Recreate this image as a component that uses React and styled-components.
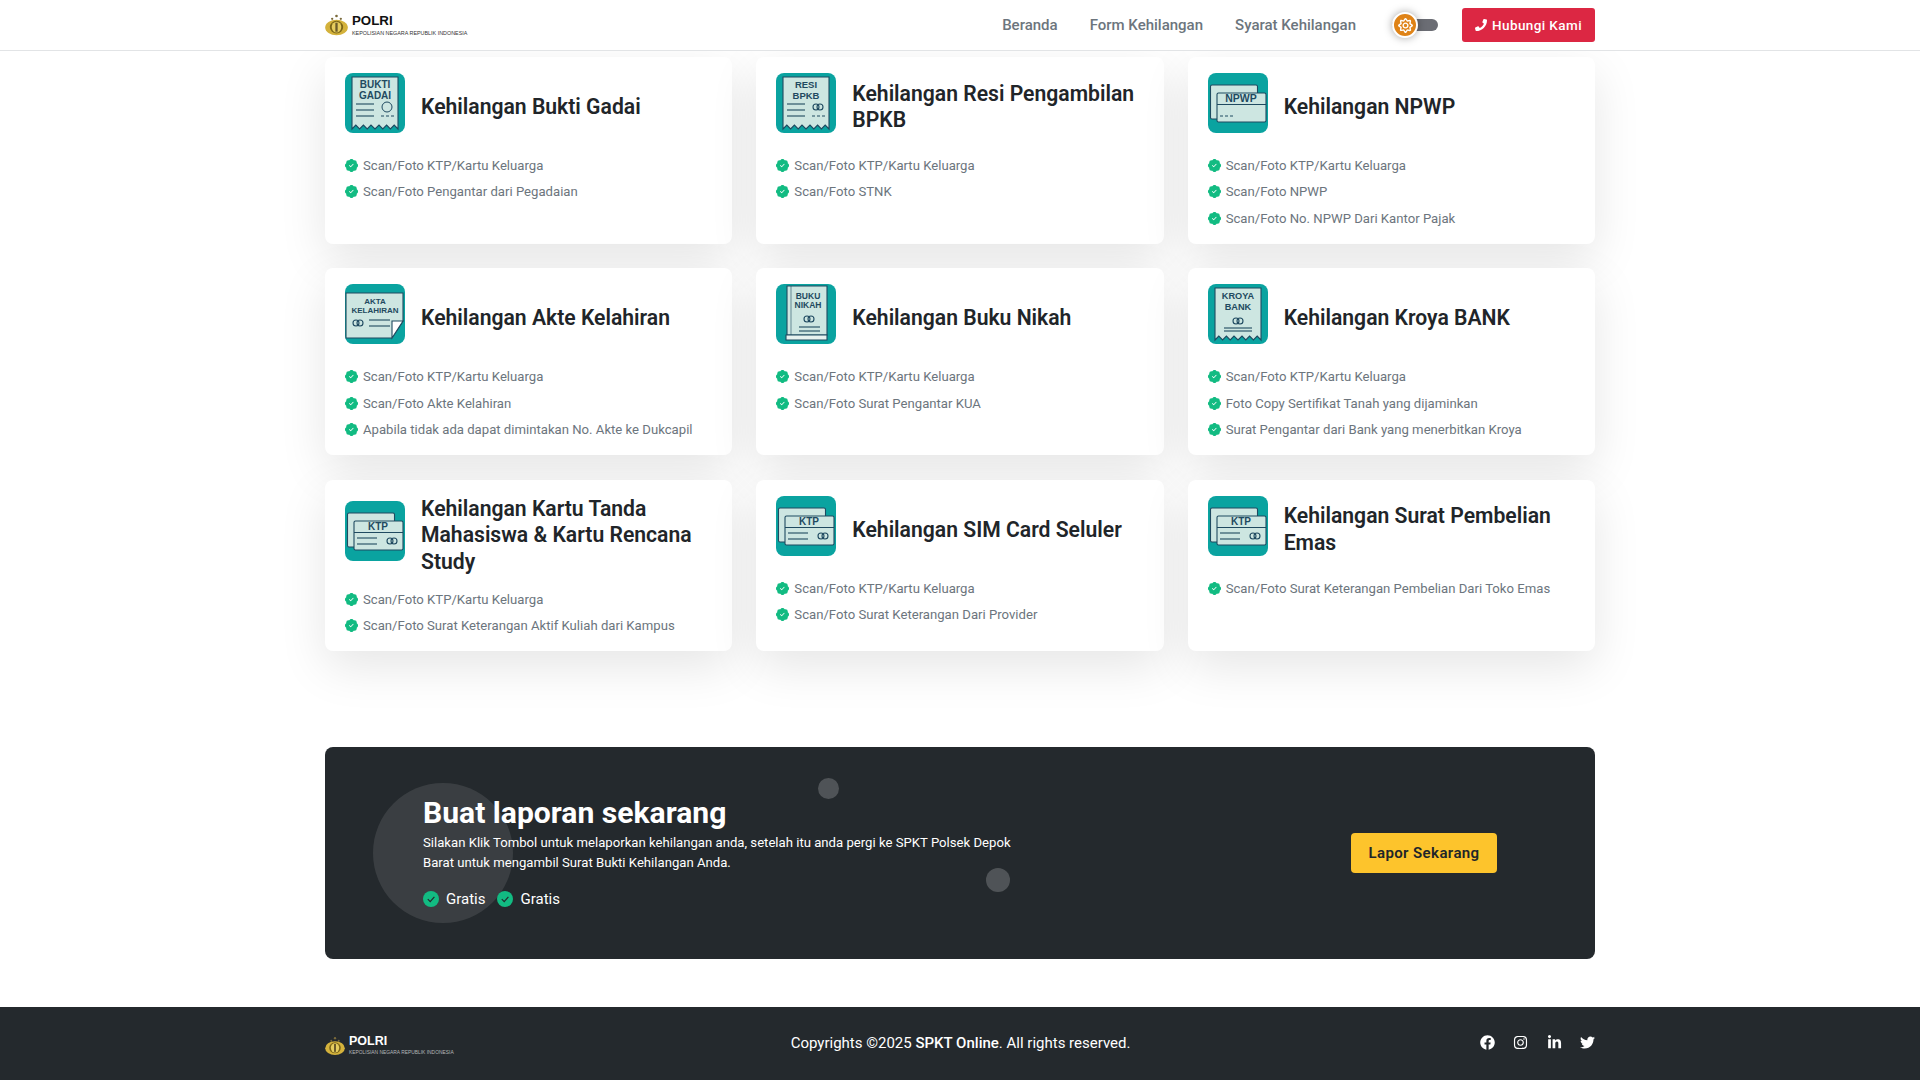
import React from 'react';
import styled, { createGlobalStyle } from 'styled-components';
import { BsPatchCheckFill } from 'react-icons/bs';
import { FaFacebook, FaInstagram, FaLinkedinIn, FaTwitter, FaPhone, FaRegSun } from 'react-icons/fa';

const GlobalStyle = createGlobalStyle`
  * { box-sizing: border-box; }
  html, body { margin: 0; padding: 0; background: #fff; }
  body { font-family: Roboto, "Liberation Sans", sans-serif; color: #212529; overflow: hidden; }
`;

const Page = styled.div`
  display: flex;
  flex-direction: column;
  height: 1080px;
`;

const Container = styled.div`
  width: 1270px;
  margin: 0 auto;
`;

const Header = styled.header`
  position: relative;
  z-index: 5;
  height: 51px;
  background: #fff;
  border-bottom: 1px solid #e2e4e6;
`;

const HeaderRow = styled(Container)`
  display: flex;
  align-items: center;
  justify-content: space-between;
  height: 50px;
`;

const Brand = styled.div`
  display: flex;
  align-items: center;
  gap: ${p => p.$gap}px;
  margin-top: ${p => p.$top || 0}px;
`;

const BrandText = styled.div`
  display: flex;
  flex-direction: column;
  font-family: "Liberation Sans", Arial, sans-serif;
  color: ${p => (p.$dark ? '#fff' : '#111')};
`;

const BrandName = styled.span`
  font-size: ${p => p.$size}px;
  font-weight: 700;
  line-height: 14px;
`;

const BrandSub = styled.span`
  font-size: ${p => p.$size}px;
  line-height: 8px;
  margin-top: 1px;
  white-space: nowrap;
  color: ${p => p.$color};
`;

const Nav = styled.nav`
  display: flex;
  align-items: center;
`;

const NavLink = styled.a`
  font-size: 15px;
  font-weight: 500;
  color: #6c757d;
  margin-right: ${p => (p.$last ? 0 : 32)}px;
  white-space: nowrap;
`;

const Toggle = styled.div`
  position: relative;
  width: 46px;
  height: 12px;
  margin-left: 36px;
  margin-right: 24px;
  border-radius: 6px;
  background: #6b6d74;
`;

const Knob = styled.span`
  position: absolute;
  left: 0;
  top: -7px;
  width: 26px;
  height: 26px;
  display: flex;
  align-items: center;
  justify-content: center;
  border-radius: 50%;
  background: #df8317;
  border: 2px solid #fff;
  box-shadow: 0 0 8px rgba(0, 0, 0, 0.35);
  color: #fff;
  font-size: 15px;
`;

const CallButton = styled.a`
  display: flex;
  align-items: center;
  justify-content: center;
  gap: 5px;
  width: 133px;
  height: 34px;
  border-radius: 3px;
  background: #dc2743;
  color: #fff;
  font-size: 13.5px;
  font-weight: 500;
  letter-spacing: 0.4px;
`;

const CardGrid = styled(Container)`
  display: grid;
  grid-template-columns: repeat(3, 1fr);
  gap: 24.4px 24px;
  padding-top: 6px;
`;

const Card = styled.div`
  padding: 16px 20px 12.3px;
  background: #fff;
  border-radius: 8px;
  box-shadow: 0 16px 48px rgba(0, 0, 0, 0.1);
`;

const CardHead = styled.div`
  display: flex;
  align-items: center;
  gap: 16px;
  margin-bottom: 11.2px;
`;

const IconBox = styled.div`
  flex: none;
  width: 60px;
  height: 68px;
`;

const CardTitle = styled.h3`
  margin: 0;
  font-size: 21.15px;
  font-weight: 600;
  line-height: 26.4px;
  color: #212529;
`;

const ReqList = styled.ul`
  list-style: none;
  margin: 0;
  padding: 0;
`;

const ReqItem = styled.li`
  display: flex;
  align-items: center;
  gap: 5px;
  height: 26.5px;
  font-size: 13.15px;
  color: #6c757d;
  white-space: nowrap;
  svg { flex: none; color: #12bb82; font-size: 13px; }
`;

const Cta = styled(Container)`
  position: relative;
  display: flex;
  align-items: center;
  justify-content: space-between;
  height: 212px;
  margin-top: 95.7px;
  padding: 0 98px;
  overflow: hidden;
  border-radius: 8px;
  background: #24292d;
`;

const Bubble = styled.span`
  position: absolute;
  left: ${p => p.$x}px;
  top: ${p => p.$y}px;
  width: ${p => p.$d}px;
  height: ${p => p.$d}px;
  border-radius: 50%;
  background: rgba(255, 255, 255, ${p => p.$a});
`;

const CtaBody = styled.div`
  position: relative;
  width: 600px;
  padding-bottom: 2.5px;
  color: #fff;
`;

const CtaTitle = styled.h2`
  margin: 0 0 2px;
  font-size: 30.1px;
  font-weight: 700;
  line-height: 36px;
`;

const CtaText = styled.p`
  margin: 0;
  font-size: 13.15px;
  line-height: 20px;
`;

const Perks = styled.div`
  display: flex;
  gap: 12px;
  margin-top: 16.5px;
`;

const Perk = styled.span`
  display: flex;
  align-items: center;
  gap: 7px;
  font-size: 15px;
  line-height: 20px;
`;

const CtaButton = styled.a`
  position: relative;
  display: flex;
  align-items: center;
  justify-content: center;
  width: 146px;
  height: 40px;
  border-radius: 4px;
  background: #fdc42c;
  color: #212529;
  font-size: 15px;
  font-weight: 600;
  letter-spacing: 0.4px;
`;

const Footer = styled.footer`
  flex: 1;
  margin-top: 48px;
  background: #24292d;
`;

const FooterRow = styled(Container)`
  display: flex;
  align-items: center;
  justify-content: space-between;
  height: 73px;
  padding-bottom: 3px;
`;

const Copy = styled.p`
  margin: 1px 0 0 -12px;
  font-size: 15px;
  color: #fff;
  b { font-weight: 500; }
`;

const Socials = styled.div`
  display: flex;
  align-items: center;
  gap: 18.5px;
  color: #fff;
  font-size: 15px;
  svg { display: block; }
`;

const INK = '#1f4a60';
const PAPER = '#cde6e1';
const TEAL = '#0aa3a0';

const Crest = ({ width, height }) => (
  <svg width={width} height={height} viewBox="0 0 24 22">
    <circle cx="12" cy="1.6" r="1.4" fill="#7a6a3a" />
    <circle cx="7.5" cy="4.6" r="1.2" fill="#7a6a3a" />
    <circle cx="16.5" cy="4.6" r="1.2" fill="#7a6a3a" />
    <ellipse cx="12" cy="13.6" rx="11.8" ry="8.2" fill="#d4b23c" />
    <ellipse cx="12" cy="13.2" rx="7" ry="6.6" fill="#7d6718" />
    <ellipse cx="12" cy="13.2" rx="5" ry="5.6" fill="#e6cd5e" />
    <rect x="10.8" y="8.6" width="2.4" height="9.4" fill="#6b5a2a" />
  </svg>
);

const Rings = ({ x, y }) => (
  <g fill="none" stroke={INK} strokeWidth="1.1">
    <circle cx={x - 2} cy={y} r="3" />
    <circle cx={x + 2} cy={y} r="3" />
  </g>
);

const Lines = ({ x1, x2, ys }) => (
  <g stroke={INK} strokeWidth="1.1">
    {ys.map(y => <line key={y} x1={x1} x2={x2} y1={y} y2={y} />)}
  </g>
);

const Label = ({ x = 30, y, size, children }) => (
  <text x={x} y={y} textAnchor="middle" fontFamily="Liberation Sans, Arial, sans-serif" fontWeight="700" fontSize={size} fill={INK}>
    {children}
  </text>
);

const Tile = ({ children }) => (
  <svg width="60" height="60" viewBox="0 0 60 60">
    <rect width="60" height="60" rx="8" fill={TEAL} />
    {children}
  </svg>
);

const zigzag = 'M7 4H53V56L49.2 52 45.4 56 41.6 52 37.8 56 34 52 30 56 26 52 22.2 56 18.4 52 14.6 56 10.8 52 7 56Z';

const Receipt = ({ a, b, children, size = 10 }) => (
  <Tile>
    <path d={zigzag} fill={PAPER} stroke={INK} strokeWidth="1.1" />
    <Label y={14.5} size={size}>{a}</Label>
    <Label y={25.5} size={size}>{b}</Label>
    {children}
  </Tile>
);

const GadaiIcon = () => (
  <Receipt a="BUKTI" b="GADAI">
    <Lines x1={11} x2={29} ys={[31, 37, 43]} />
    <circle cx="42" cy="34" r="5" fill="none" stroke={INK} strokeWidth="1" />
    <line x1="36" x2="50" y1="43" y2="43" stroke={INK} strokeDasharray="3 2" />
  </Receipt>
);

const ResiIcon = () => (
  <Receipt a="RESI" b="BPKB" size={9.5}>
    <Lines x1={11} x2={29} ys={[31, 37, 43]} />
    <Rings x={42} y={34} />
    <line x1="36" x2="50" y1="43" y2="43" stroke={INK} strokeDasharray="3 2" />
  </Receipt>
);

const KroyaIcon = () => (
  <Receipt a="KROYA" b="BANK" size={9.2}>
    <Rings x={30} y={37} />
    <Lines x1={16} x2={44} ys={[44, 47]} />
  </Receipt>
);

const AkteIcon = () => (
  <Tile>
    <path d="M1 9H58V37L47 54H1Z" fill={PAPER} stroke={INK} strokeWidth="1.1" />
    <path d="M58 37H47V54Z" fill="#fff" stroke={INK} strokeWidth="1.1" />
    <Label y={20} size={8}>AKTA</Label>
    <Label y={28.5} size={8}>KELAHIRAN</Label>
    <Rings x={13} y={39} />
    <Lines x1={24} x2={45} ys={[36, 42]} />
  </Tile>
);

const BukuIcon = () => (
  <Tile>
    <path d="M11 2H51V51H11Z" fill={PAPER} stroke={INK} strokeWidth="1.1" />
    <path d="M15 2V51" stroke={INK} strokeWidth="0.6" />
    <path d="M10 51H51V56H10Z" fill="#e7f2ef" stroke={INK} strokeWidth="1.1" />
    <Label x={32} y={15} size={8.5}>BUKU</Label>
    <Label x={32} y={24} size={8.5}>NIKAH</Label>
    <Rings x={33} y={35} />
    <Lines x1={23} x2={44} ys={[43, 47]} />
  </Tile>
);

const CardIcon = ({ text, size = 10, children }) => (
  <Tile>
    <rect x="2.5" y="12" width="47" height="34" rx="1.5" fill={PAPER} stroke={INK} strokeWidth="1.1" />
    <rect x="9" y="20" width="49" height="29" rx="1.5" fill={PAPER} stroke={INK} strokeWidth="1.1" />
    <line x1="9" x2="58" y1="31.5" y2="31.5" stroke={INK} strokeWidth="1.1" />
    <Label x={33} y={29} size={size}>{text}</Label>
    {children}
  </Tile>
);

const KtpIcon = () => (
  <CardIcon text="KTP">
    <Lines x1={12} x2={32} ys={[37, 43]} />
    <Rings x={47} y={40} />
  </CardIcon>
);

const NpwpIcon = () => (
  <CardIcon text="NPWP" size={10.5}>
    <line x1="12" x2="27" y1="43" y2="43" stroke={INK} strokeDasharray="3 2" />
  </CardIcon>
);

const CircleCheck = () => (
  <svg width="16" height="16" viewBox="0 0 16 16">
    <circle cx="8" cy="8" r="8" fill="#12bb82" />
    <path d="M4.8 8.2 7.2 10.6 11.4 5.8" fill="none" stroke="#24292d" strokeWidth="1.2" />
  </svg>
);

const cards = [
  { title: 'Kehilangan Bukti Gadai', Icon: GadaiIcon, items: ['Scan/Foto KTP/Kartu Keluarga', 'Scan/Foto Pengantar dari Pegadaian'] },
  { title: 'Kehilangan Resi Pengambilan BPKB', Icon: ResiIcon, items: ['Scan/Foto KTP/Kartu Keluarga', 'Scan/Foto STNK'] },
  { title: 'Kehilangan NPWP', Icon: NpwpIcon, items: ['Scan/Foto KTP/Kartu Keluarga', 'Scan/Foto NPWP', 'Scan/Foto No. NPWP Dari Kantor Pajak'] },
  { title: 'Kehilangan Akte Kelahiran', Icon: AkteIcon, items: ['Scan/Foto KTP/Kartu Keluarga', 'Scan/Foto Akte Kelahiran', 'Apabila tidak ada dapat dimintakan No. Akte ke Dukcapil'] },
  { title: 'Kehilangan Buku Nikah', Icon: BukuIcon, items: ['Scan/Foto KTP/Kartu Keluarga', 'Scan/Foto Surat Pengantar KUA'] },
  { title: 'Kehilangan Kroya BANK', Icon: KroyaIcon, items: ['Scan/Foto KTP/Kartu Keluarga', 'Foto Copy Sertifikat Tanah yang dijaminkan', 'Surat Pengantar dari Bank yang menerbitkan Kroya'] },
  { title: 'Kehilangan Kartu Tanda Mahasiswa & Kartu Rencana Study', Icon: KtpIcon, items: ['Scan/Foto KTP/Kartu Keluarga', 'Scan/Foto Surat Keterangan Aktif Kuliah dari Kampus'] },
  { title: 'Kehilangan SIM Card Seluler', Icon: KtpIcon, items: ['Scan/Foto KTP/Kartu Keluarga', 'Scan/Foto Surat Keterangan Dari Provider'] },
  { title: 'Kehilangan Surat Pembelian Emas', Icon: KtpIcon, items: ['Scan/Foto Surat Keterangan Pembelian Dari Toko Emas'] },
];

const App = () => (
  <Page>
    <GlobalStyle />
    <Header>
      <HeaderRow>
        <Brand $gap={4}>
          <Crest width={23} height={22} />
          <BrandText>
            <BrandName $size={13.3}>POLRI</BrandName>
            <BrandSub $size={5.4} $color="#333">KEPOLISIAN NEGARA REPUBLIK INDONESIA</BrandSub>
          </BrandText>
        </Brand>
        <Nav>
          <NavLink>Beranda</NavLink>
          <NavLink>Form Kehilangan</NavLink>
          <NavLink $last>Syarat Kehilangan</NavLink>
          <Toggle>
            <Knob><FaRegSun /></Knob>
          </Toggle>
          <CallButton><FaPhone size={12} />Hubungi Kami</CallButton>
        </Nav>
      </HeaderRow>
    </Header>

    <CardGrid>
      {cards.map(({ title, Icon, items }) => (
        <Card key={title}>
          <CardHead>
            <IconBox><Icon /></IconBox>
            <CardTitle>{title}</CardTitle>
          </CardHead>
          <ReqList>
            {items.map(item => (
              <ReqItem key={item}><BsPatchCheckFill />{item}</ReqItem>
            ))}
          </ReqList>
        </Card>
      ))}
    </CardGrid>

    <Cta>
      <Bubble $x={48} $y={36} $d={140} $a={0.1} />
      <Bubble $x={493} $y={31} $d={21} $a={0.2} />
      <Bubble $x={661} $y={121} $d={24} $a={0.2} />
      <CtaBody>
        <CtaTitle>Buat laporan sekarang</CtaTitle>
        <CtaText>Silakan Klik Tombol untuk melaporkan kehilangan anda, setelah itu anda pergi ke SPKT Polsek Depok Barat untuk mengambil Surat Bukti Kehilangan Anda.</CtaText>
        <Perks>
          <Perk><CircleCheck />Gratis</Perk>
          <Perk><CircleCheck />Gratis</Perk>
        </Perks>
      </CtaBody>
      <CtaButton>Lapor Sekarang</CtaButton>
    </Cta>

    <Footer>
      <FooterRow>
        <Brand $gap={4} $top={7}>
          <Crest width={20} height={20} />
          <BrandText $dark>
            <BrandName $size={12.5}>POLRI</BrandName>
            <BrandSub $size={4.9} $color="#b5b8ba">KEPOLISIAN NEGARA REPUBLIK INDONESIA</BrandSub>
          </BrandText>
        </Brand>
        <Copy>Copyrights ©2025 <b>SPKT Online</b>. All rights reserved.</Copy>
        <Socials>
          <FaFacebook />
          <FaInstagram />
          <FaLinkedinIn />
          <FaTwitter />
        </Socials>
      </FooterRow>
    </Footer>
  </Page>
);

export default App;
